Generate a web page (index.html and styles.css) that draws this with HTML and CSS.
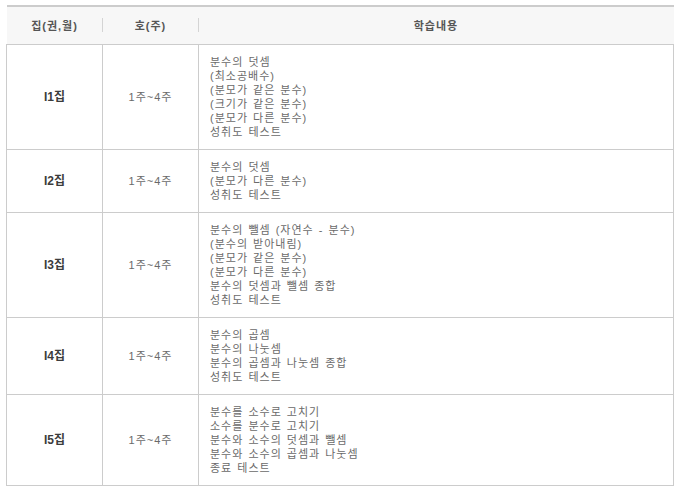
FILE: index.html
```html
<!DOCTYPE html>
<html lang="ko">
<head>
<meta charset="utf-8">
<link rel="stylesheet" href="styles.css">
</head>
<body>
<table class="sched">
  <colgroup>
    <col class="c-vol">
    <col class="c-week">
    <col class="c-body">
  </colgroup>
  <thead>
    <tr>
      <th class="sep">집(권,월)</th>
      <th class="sep">호(주)</th>
      <th>학습내용</th>
    </tr>
  </thead>
  <tbody>
    <tr>
      <td class="vol">I1집</td>
      <td class="week">1주~4주</td>
      <td class="desc">분수의 덧셈<br>(최소공배수)<br>(분모가 같은 분수)<br>(크기가 같은 분수)<br>(분모가 다른 분수)<br>성취도 테스트</td>
    </tr>
    <tr>
      <td class="vol">I2집</td>
      <td class="week">1주~4주</td>
      <td class="desc">분수의 덧셈<br>(분모가 다른 분수)<br>성취도 테스트</td>
    </tr>
    <tr>
      <td class="vol">I3집</td>
      <td class="week">1주~4주</td>
      <td class="desc">분수의 뺄셈 (자연수 - 분수)<br>(분수의 받아내림)<br>(분모가 같은 분수)<br>(분모가 다른 분수)<br>분수의 덧셈과 뺄셈 종합<br>성취도 테스트</td>
    </tr>
    <tr>
      <td class="vol">I4집</td>
      <td class="week">1주~4주</td>
      <td class="desc">분수의 곱셈<br>분수의 나눗셈<br>분수의 곱셈과 나눗셈 종합<br>성취도 테스트</td>
    </tr>
    <tr>
      <td class="vol">I5집</td>
      <td class="week">1주~4주</td>
      <td class="desc">분수를 소수로 고치기<br>소수를 분수로 고치기<br>분수와 소수의 덧셈과 뺄셈<br>분수와 소수의 곱셈과 나눗셈<br>종료 테스트</td>
    </tr>
  </tbody>
</table>
</body>
</html>
```

FILE: styles.css
```css
html, body {
  margin: 0;
  padding: 0;
  background: #ffffff;
}

body {
  font-family: "Liberation Sans", "Noto Sans CJK KR", sans-serif;
  font-size: 11px;
  line-height: 14px;
  color: #6a6a6a;
}

.sched {
  border-collapse: collapse;
  width: 668px;
  margin: 5px 0 0 6px;
  table-layout: fixed;
}

.c-vol { width: 96px; }
.c-week { width: 96px; }

.sched th {
  position: relative;
  height: 37px;
  padding: 0;
  background: #f7f7f7;
  border-top: 2px solid #cccccc;
  border-bottom: 1px solid #cccccc;
  font-weight: bold;
  color: #555555;
  text-align: center;
  vertical-align: middle;
  letter-spacing: 1px;
}

.sched th.sep::after {
  content: "";
  position: absolute;
  right: 0;
  top: 11px;
  width: 1px;
  height: 14px;
  background: #d4d4d4;
}

.sched td {
  border: 1px solid #cccccc;
  padding: 10px 11px;
  vertical-align: middle;
}

.sched td.vol {
  text-align: center;
  font-weight: bold;
  font-size: 12px;
  color: #3c3c3c;
}

.sched td.week {
  text-align: center;
  letter-spacing: 1px;
}

.sched td.desc {
  text-align: left;
  letter-spacing: 1px;
  word-spacing: 1px;
}
```
